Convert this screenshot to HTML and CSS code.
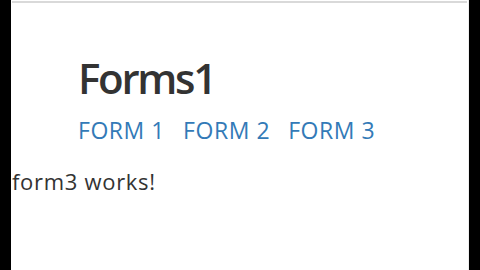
FILE: index.html
```html
<!DOCTYPE html>
<html>
<head>
<meta charset="utf-8">
<link rel="stylesheet" href="styles.css">
</head>
<body>
<div class="frame">
  <div class="side"></div>
  <div class="page">
    <div class="topline"></div>
    <div class="header">
      <h1 class="title">Forms1</h1>
      <nav class="nav">
        <a class="link" href="#">FORM 1</a>
        <a class="link" href="#">FORM 2</a>
        <a class="link" href="#">FORM 3</a>
      </nav>
    </div>
    <p class="out">form3 works!</p>
  </div>
  <div class="side side-right"></div>
</div>
</body>
</html>
```
FILE: styles.css
```css
html, body {
  margin: 0;
  padding: 0;
  background: #000;
  width: 480px;
  height: 270px;
  overflow: hidden;
}
.frame {
  display: flex;
  height: 270px;
}
.side {
  width: 11px;
  background: #000;
  flex: none;
}
.side-right {
  width: 11px;
}
.page {
  flex: 1;
  background: #fff;
  padding-top: 1px;
  font-family: "Open Sans", "Noto Sans", sans-serif;
  color: #333;
  border-right: 1px solid #eee;
}
.topline {
  height: 2px;
  background: #d9d9d9;
  margin: 0 1px;
}
.header {
  padding-left: 67px;
  padding-top: 50px;
}
.title {
  margin: 0;
  font-size: 42px;
  font-weight: 600;
  letter-spacing: -2.3px;
  line-height: 50px;
  color: #333;
}
.nav {
  display: flex;
  gap: 18px;
  margin-top: 12px;
}
.link {
  color: #337ab7;
  text-decoration: none;
  font-size: 23px;
  letter-spacing: 0.55px;
  line-height: 30px;
}
.out {
  margin: 21px 0 0 1px;
  font-size: 22px;
  letter-spacing: 0.7px;
  line-height: 30px;
  color: #333;
}
```
